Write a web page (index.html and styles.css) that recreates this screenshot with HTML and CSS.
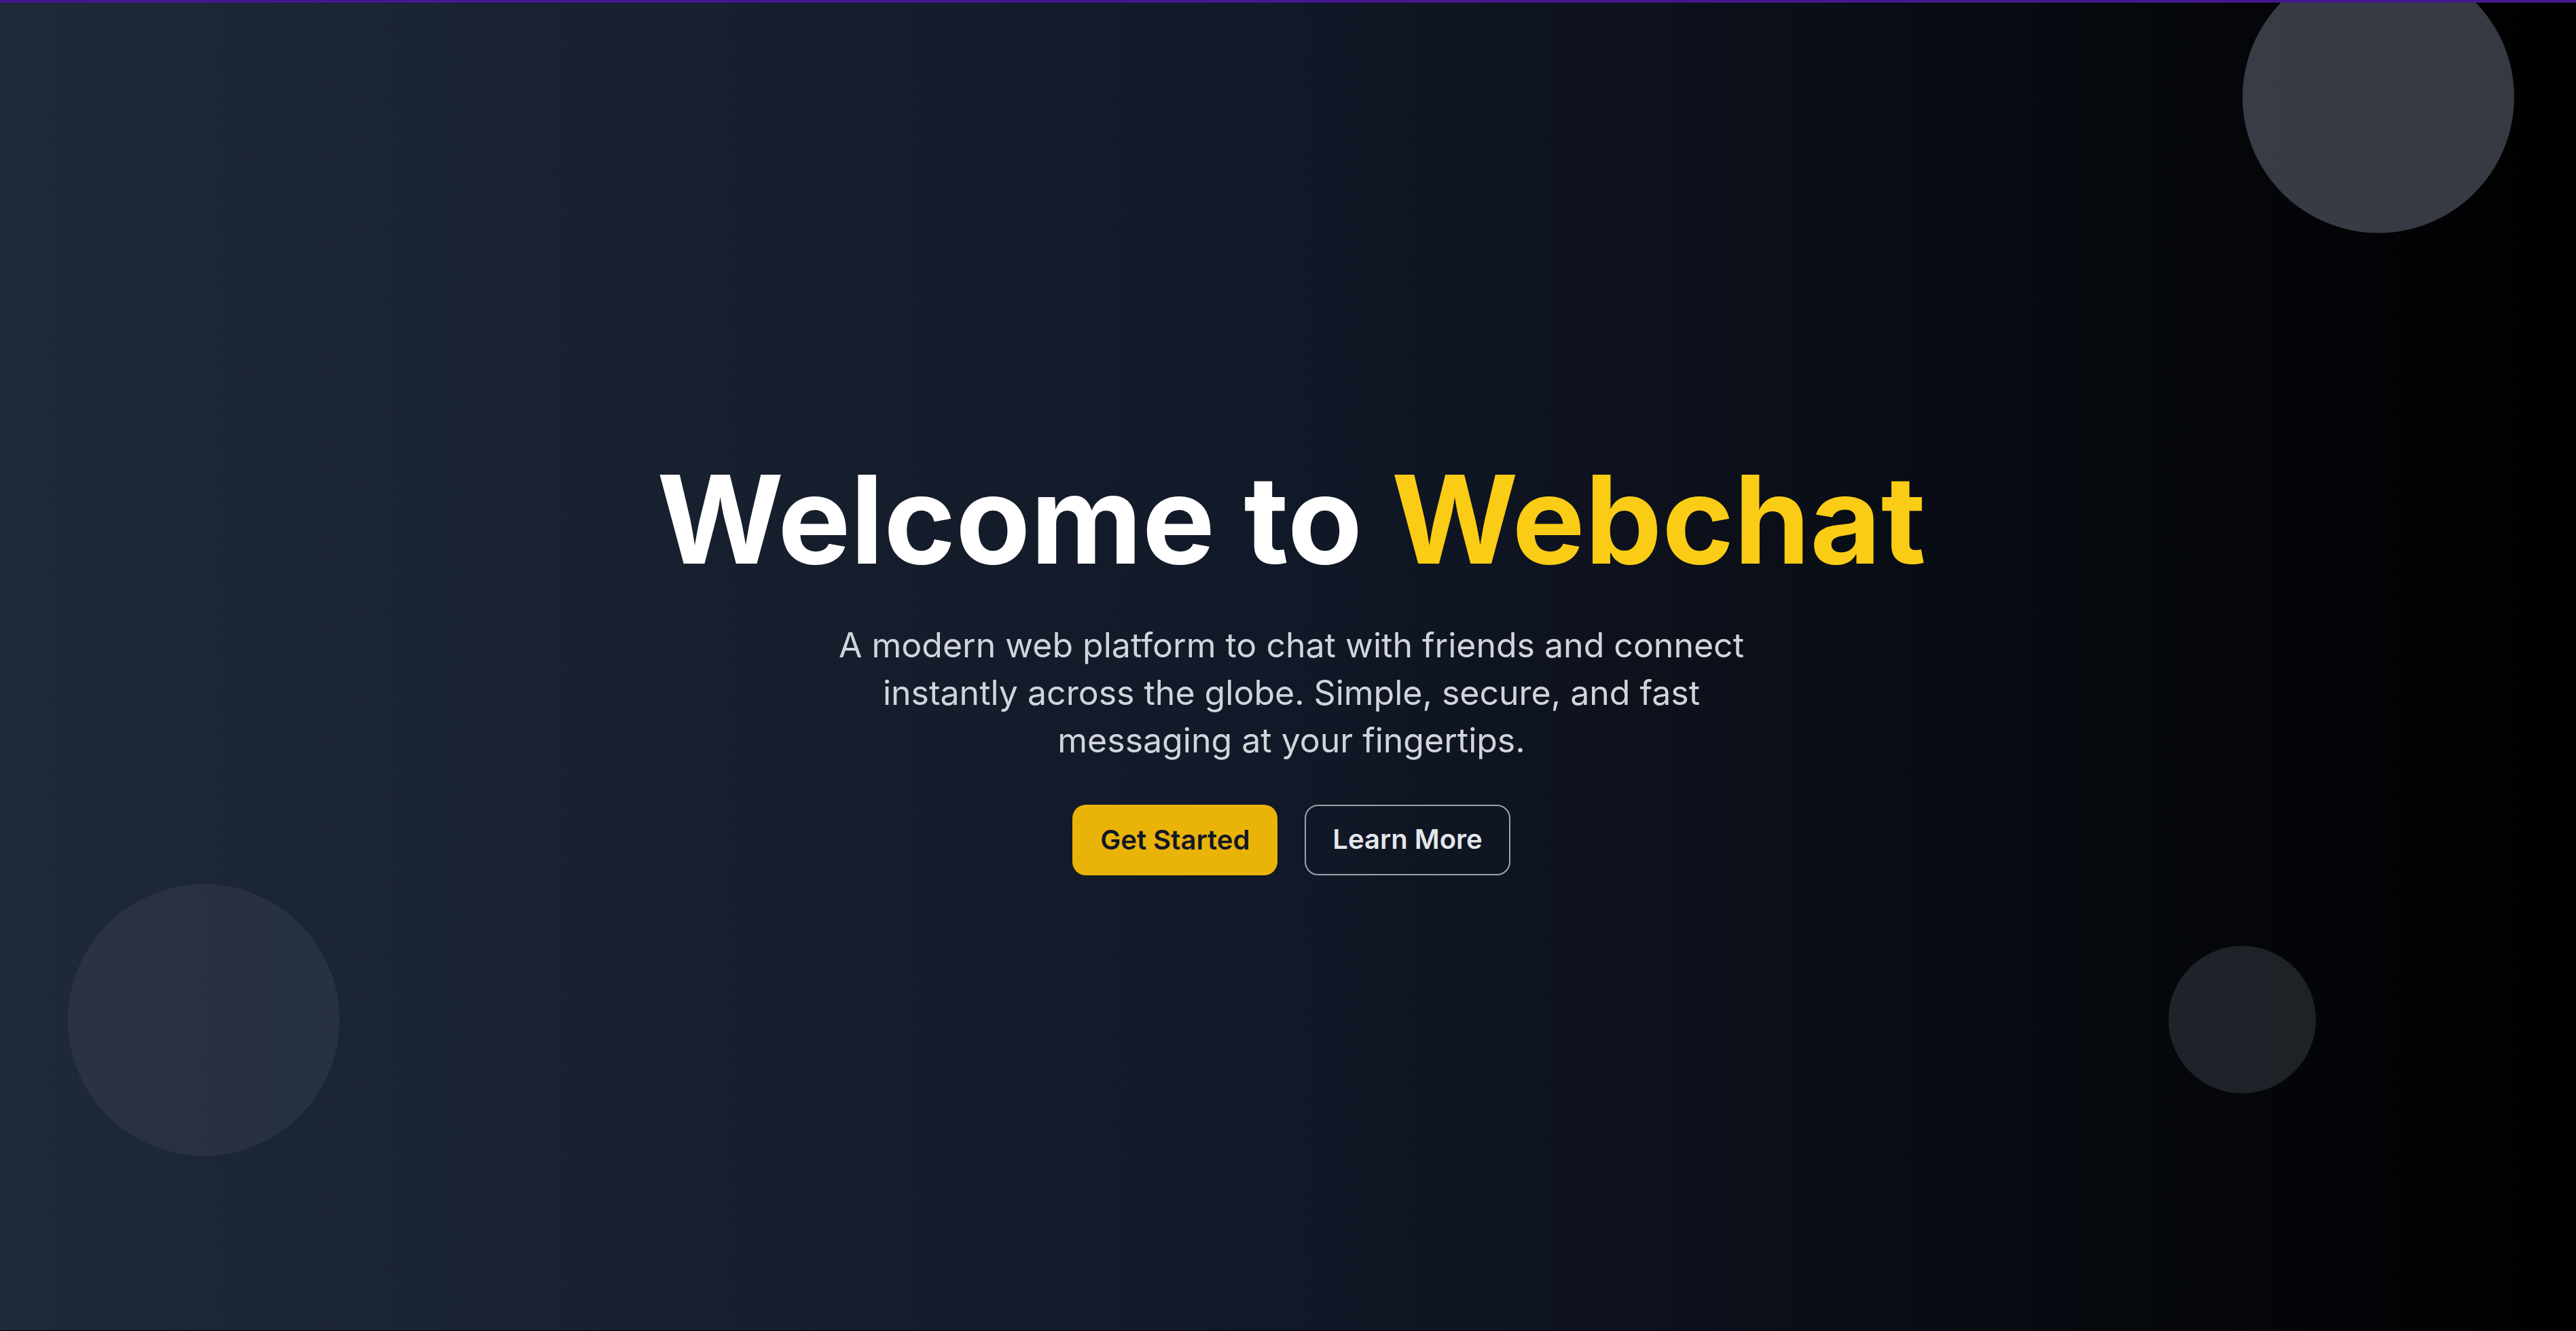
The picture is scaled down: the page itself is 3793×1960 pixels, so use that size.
FILE: index.html
```html
<!DOCTYPE html>
<html lang="en">
<head>
<meta charset="utf-8">
<title>Webchat</title>
<link rel="stylesheet" href="styles.css">
</head>
<body>
<div class="page">
  <div class="topbar"></div>
  <main class="hero">
    <span class="blob blob-tr"></span>
    <span class="blob blob-bl"></span>
    <span class="blob blob-br"></span>
    <div class="content">
      <h1 class="title">Welcome to <span class="accent">Webchat</span></h1>
      <p class="lead">A modern web platform to chat with friends and connect instantly across the globe. Simple, secure, and fast messaging at your fingertips.</p>
      <div class="actions">
        <a class="btn btn-primary" href="#">Get Started</a>
        <a class="btn btn-outline" href="#">Learn More</a>
      </div>
    </div>
  </main>
</div>
</body>
</html>
```

FILE: styles.css
```css
* { box-sizing: border-box; }
html, body { margin: 0; padding: 0; }
body {
  font-family: Inter, "Noto Sans", "Liberation Sans", sans-serif;
  background: #000;
}
.page {
  height: 1960px;
  display: flex;
  flex-direction: column;
  background: linear-gradient(to right, #1f2937, #111827, #000000);
  border-bottom: 1px solid #05070b;
}
.topbar {
  height: 4px;
  flex: 0 0 4px;
  background: linear-gradient(to bottom, #3b1282, #4c1d95 50%, #3b1282);
}
.hero {
  position: relative;
  flex: 1;
  overflow: hidden;
  display: flex;
  align-items: center;
  justify-content: center;
  padding-left: 10px;
}
.blob {
  position: absolute;
  border-radius: 50%;
}
.blob-tr {
  width: 400px; height: 400px;
  top: -61px; right: 91px;
  background: rgba(107, 114, 128, 0.5);
}
.blob-bl {
  width: 400px; height: 400px;
  left: 100px; bottom: 257px;
  background: rgba(107, 114, 128, 0.16);
}
.blob-br {
  width: 217px; height: 217px;
  right: 383px; bottom: 349px;
  background: rgba(107, 114, 128, 0.26);
}
.content {
  position: relative;
  display: flex;
  flex-direction: column;
  align-items: center;
  text-align: center;
}
.title {
  margin: 0 0 60px;
  font-size: 180px;
  line-height: 180px;
  font-weight: 700;
  color: #ffffff;
}
.accent { color: #facc15; }
.lead {
  margin: 0 0 60px;
  max-width: 1440px;
  font-size: 50px;
  line-height: 70px;
  color: #d1d5db;
}
.actions {
  display: flex;
  gap: 40px;
}
.btn {
  display: inline-block;
  font-size: 40px;
  line-height: 60px;
  font-weight: 600;
  text-decoration: none;
  border-radius: 20px;
  padding: 22px 41px;
}
.btn-primary {
  background: #eab308;
  color: #111827;
}
.btn-outline {
  border: 2.5px solid #9ca3af;
  color: #e5e7eb;
  padding: 19.5px 39px;
}
```
